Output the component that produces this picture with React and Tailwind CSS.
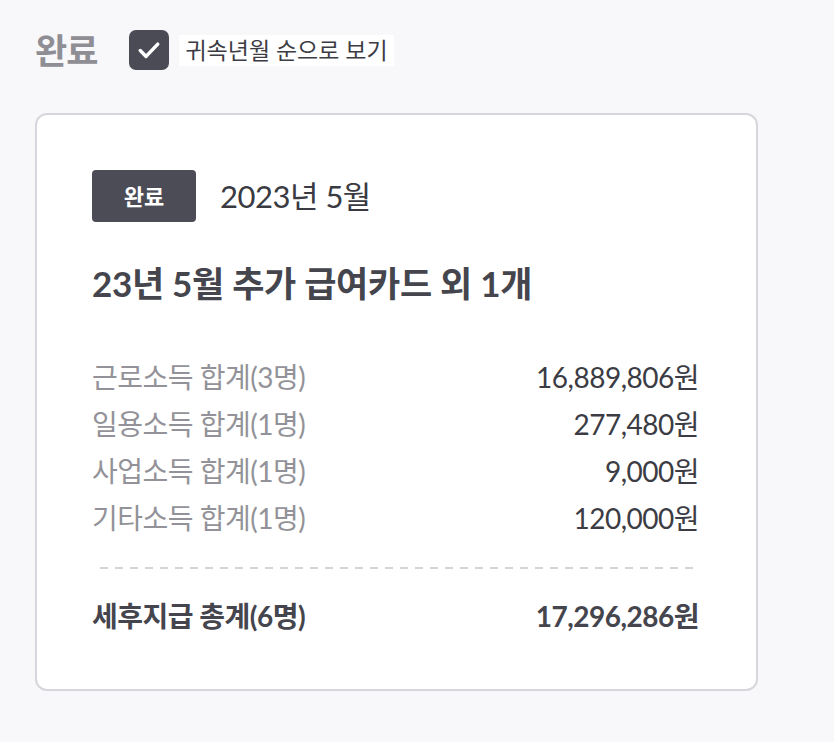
export default function App() {
  const rows = [
    { label: '근로소득 합계(3명)', value: '16,889,806원' },
    { label: '일용소득 합계(1명)', value: '277,480원' },
    { label: '사업소득 합계(1명)', value: '9,000원' },
    { label: '기타소득 합계(1명)', value: '120,000원' },
  ]

  return (
    <div
      className="min-h-[742px] w-[834px] bg-[#f8f8fa] pl-[35px] pt-[28px]"
      style={{ fontFamily: 'Lato, "Noto Sans CJK KR", sans-serif' }}
    >
      <div className="flex items-center h-[44px]">
        <span className="text-[35px] font-bold text-[#8e8e94] leading-none tracking-[-1px]">완료</span>
        <div className="ml-[32px] w-[40px] h-[40px] rounded-[7px] bg-[#4b4b55] flex items-center justify-center">
          <svg width="28" height="28" viewBox="0 0 24 24" fill="none" stroke="white" strokeWidth="3" strokeLinecap="round" strokeLinejoin="round">
            <path d="M4.5 12.5l5 5L19.5 7" />
          </svg>
        </div>
        <span className="ml-[10px] bg-white px-[6px] py-[4px] text-[23px] text-[#3c3c44] leading-none">귀속년월 순으로 보기</span>
      </div>

      <div className="mt-[41px] w-[723px] h-[578px] bg-white border-2 border-[#d6d6dc] rounded-[12px] pt-[55px] pl-[55px] pr-[57px]">
        <div className="flex items-center">
          <div className="w-[104px] h-[52px] rounded-[4px] bg-[#4c4c57] flex items-center justify-center text-white text-[22px] font-bold">완료</div>
          <span className="ml-[24px] text-[31px] text-[#3a3a42] tracking-[-0.5px]">2023년 5월</span>
        </div>

        <div className="mt-[39px] text-[35px] font-bold text-[#45454e] tracking-[-0.3px] leading-[44px]">
          23년 5월 추가 급여카드 외 1개
        </div>

        <div className="mt-[56px] flex flex-col gap-[15px]">
          {rows.map((r) => (
            <div key={r.label} className="flex justify-between items-center h-[32px] text-[28px] tracking-[-0.5px]">
              <span className="text-[#929298]">{r.label}</span>
              <span className="text-[#3c3c44]">{r.value}</span>
            </div>
          ))}
        </div>

        <div className="mt-[33px] ml-[8px] h-[2px] bg-[repeating-linear-gradient(to_right,#d4d4d8_0_8px,transparent_8px_15px)]" />

        <div className="mt-[31px] flex justify-between items-center h-[32px] text-[28px] font-bold text-[#45454e] tracking-[-0.5px]">
          <span>세후지급 총계(6명)</span>
          <span>17,296,286원</span>
        </div>
      </div>
    </div>
  )
}
